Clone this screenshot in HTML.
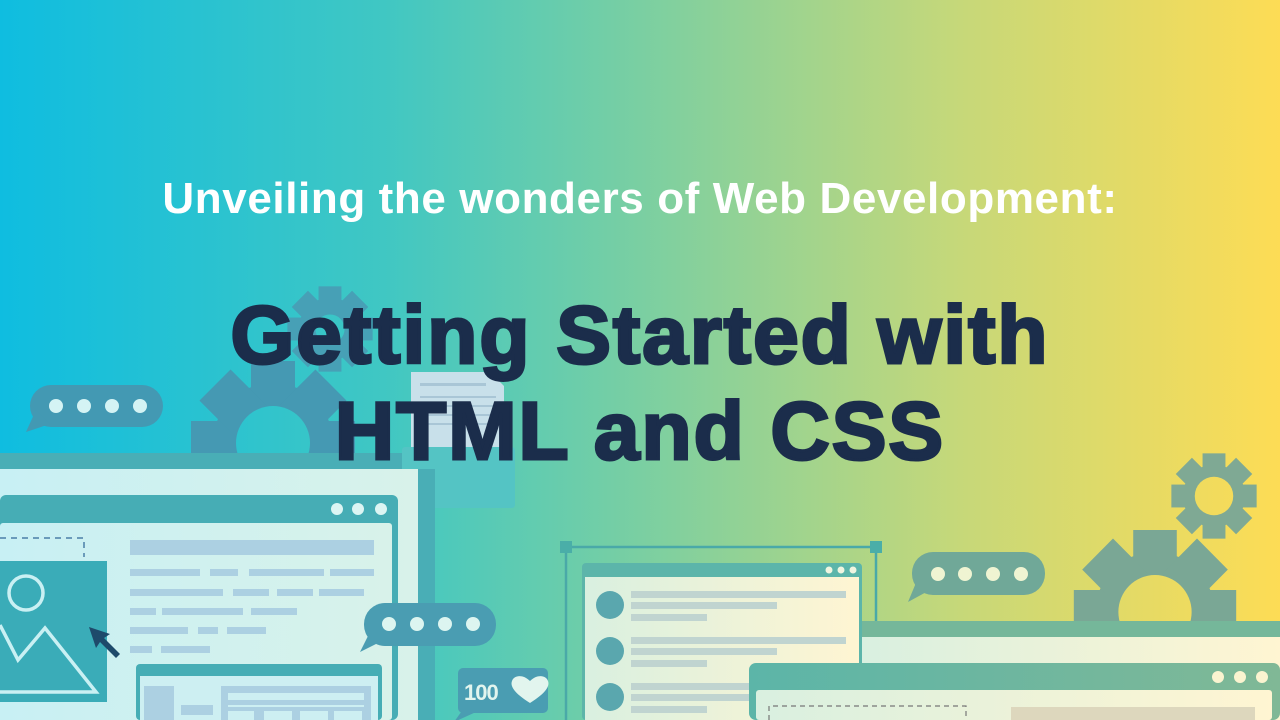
<!DOCTYPE html>
<html><head><meta charset="utf-8"><style>
html,body{margin:0;padding:0;width:1280px;height:720px;overflow:hidden}
body{position:relative;font-family:"Liberation Sans",Arial,sans-serif}
svg{position:absolute;left:0;top:0}
.sub{position:absolute;left:0;width:1280px;top:174px;text-align:center;color:#fff;font-weight:bold;font-size:44px;letter-spacing:0.6px}
.t{position:absolute;left:0;width:1280px;text-align:center;color:#1b2d4b;font-weight:bold;font-size:82px;letter-spacing:2px;-webkit-text-stroke:3px #1b2d4b;line-height:1}
</style></head><body>
<svg width="1280" height="720" viewBox="0 0 1280 720">
<defs>
<linearGradient id="bg" x1="0" y1="0" x2="1" y2="0">
<stop offset="0" stop-color="#0fbde0"/><stop offset="0.3" stop-color="#40c7c3"/><stop offset="0.5" stop-color="#7acfa2"/><stop offset="0.75" stop-color="#c6d879"/><stop offset="1" stop-color="#fddc55"/>
</linearGradient>
<linearGradient id="lp" x1="0" y1="0" x2="1" y2="0"><stop offset="0" stop-color="#c8f0f4"/><stop offset="1" stop-color="#d8f2ea"/></linearGradient>
<linearGradient id="rp" x1="0" y1="0" x2="1" y2="0"><stop offset="0" stop-color="#d9f0e0"/><stop offset="1" stop-color="#fff5d2"/></linearGradient>
<linearGradient id="rb" x1="0" y1="0" x2="1" y2="0"><stop offset="0" stop-color="#5cb5a8"/><stop offset="1" stop-color="#80b896"/></linearGradient>
<g id="teeth">
<circle r="60"/>
<rect x="-22" y="-82" width="44" height="164"/>
<rect x="-22" y="-82" width="44" height="164" transform="rotate(45)"/>
<rect x="-22" y="-82" width="44" height="164" transform="rotate(90)"/>
<rect x="-22" y="-82" width="44" height="164" transform="rotate(135)"/>
</g>
<mask id="m1"><rect x="-100" y="-100" width="200" height="200" fill="#fff"/><circle r="37" fill="#000"/></mask>
<mask id="m2"><rect x="-100" y="-100" width="200" height="200" fill="#fff"/><circle r="28" fill="#000"/></mask>
</defs>
<rect width="1280" height="720" fill="url(#bg)"/>

<g transform="translate(330,329) scale(0.52)" fill="#47a0b6" mask="url(#m2)"><use href="#teeth"/></g>
<g transform="translate(273,443)" fill="#4599b3" mask="url(#m1)"><use href="#teeth"/></g>

<rect x="30" y="385" width="133" height="42" rx="21" fill="#4399b3"/>
<path d="M36 410 L26 432 L50 424 Z" fill="#4399b3"/>
<g fill="#d4f3f4"><circle cx="56" cy="406" r="7"/><circle cx="84" cy="406" r="7"/><circle cx="112" cy="406" r="7"/><circle cx="140" cy="406" r="7"/></g>

<path d="M411 372 H490 L504 386 V460 H411 Z" fill="#c8e0ea"/>
<g fill="#a9c6d6"><rect x="420" y="383" width="66" height="3"/><rect x="420" y="396" width="76" height="2"/><rect x="420" y="405" width="76" height="2"/><rect x="420" y="414" width="76" height="2"/><rect x="420" y="423" width="76" height="2"/></g>
<rect x="402" y="447" width="113" height="61" rx="3" fill="#54c4c4"/>

<rect x="0" y="453" width="402" height="16" fill="#49aeb6"/>
<rect x="0" y="469" width="418" height="251" fill="url(#lp)"/>
<rect x="418" y="469" width="17" height="251" fill="#49aeb6"/>
<rect x="0" y="495" width="398" height="225" rx="6" fill="#46adb5"/>
<g fill="#dcf5f3"><circle cx="337" cy="509" r="6"/><circle cx="358" cy="509" r="6"/><circle cx="381" cy="509" r="6"/></g>
<rect x="0" y="523" width="392" height="197" rx="3" fill="url(#lp)"/>
<path d="M0 538 H84 V557" fill="none" stroke="#4b7fa8" stroke-width="1.5" stroke-dasharray="6 5"/>
<rect x="0" y="561" width="107" height="141" fill="#3aacb8"/>
<circle cx="26" cy="593" r="17" fill="none" stroke="#c9f0f3" stroke-width="3.5"/>
<path d="M0 625 L18 660 L45 628 L96 692 H0" fill="none" stroke="#c9f0f3" stroke-width="3.5"/>
<path d="M89 627 L110 634 L104 638 L120 654 L116 658 L100 642 L96 648 Z" fill="#1e4a6b"/>
<g fill="#acd0e2">
<rect x="130" y="540" width="244" height="15"/>
<rect x="130" y="569" width="70" height="7"/><rect x="210" y="569" width="28" height="7"/><rect x="249" y="569" width="75" height="7"/><rect x="330" y="569" width="44" height="7"/>
<rect x="130" y="589" width="93" height="7"/><rect x="233" y="589" width="36" height="7"/><rect x="277" y="589" width="36" height="7"/><rect x="319" y="589" width="45" height="7"/>
<rect x="130" y="608" width="26" height="7"/><rect x="162" y="608" width="81" height="7"/><rect x="251" y="608" width="46" height="7"/>
<rect x="130" y="627" width="58" height="7"/><rect x="198" y="627" width="20" height="7"/><rect x="227" y="627" width="39" height="7"/>
<rect x="130" y="646" width="22" height="7"/><rect x="161" y="646" width="49" height="7"/>
</g>
<rect x="364" y="603" width="132" height="43" rx="21" fill="#4a9db2"/>
<path d="M372 628 L360 652 L384 640 Z" fill="#4a9db2"/>
<g fill="#dcf5f0"><circle cx="389" cy="624" r="7"/><circle cx="417" cy="624" r="7"/><circle cx="445" cy="624" r="7"/><circle cx="473" cy="624" r="7"/></g>
<rect x="136" y="664" width="246" height="56" rx="4" fill="#46adb5"/>
<rect x="140" y="676" width="238" height="44" fill="#cdeff2"/>
<rect x="144" y="686" width="30" height="34" fill="#acd0e2"/>
<rect x="181" y="705" width="32" height="10" fill="#acd0e2"/>
<rect x="221" y="686" width="150" height="34" fill="#acd0e2"/>
<rect x="228" y="693" width="136" height="7" fill="#cdeff2"/>
<rect x="228" y="705" width="136" height="2" fill="#cdeff2"/>
<rect x="228" y="711" width="26" height="9" fill="#cdeff2"/><rect x="264" y="711" width="28" height="9" fill="#cdeff2"/><rect x="300" y="711" width="28" height="9" fill="#cdeff2"/><rect x="334" y="711" width="28" height="9" fill="#cdeff2"/>
<rect x="458" y="668" width="90" height="45" rx="5" fill="#4a9db2"/>
<path d="M464 708 L454 722 L476 712 Z" fill="#4a9db2"/>
<text x="464" y="700" font-family="Liberation Sans" font-weight="bold" font-size="22" fill="#e2f5ee" letter-spacing="-1">100</text>
<path d="M530 703 C514 693 510 686 512 681 C514 675 523 674 530 681 C537 674 546 675 548 681 C550 686 546 693 530 703 Z" fill="#e2f5ee"/>

<g stroke="#4aa9a8" stroke-width="2.5" fill="none"><path d="M566 547 H876 M566 547 V720 M876 547 V720"/></g>
<rect x="560" y="541" width="12" height="12" fill="#4aaea8"/><rect x="870" y="541" width="12" height="12" fill="#4aaea8"/>
<rect x="582" y="563" width="280" height="157" rx="4" fill="#5cb5aa"/>
<g fill="#f0f5e0"><circle cx="829" cy="570" r="3.5"/><circle cx="841" cy="570" r="3.5"/><circle cx="853" cy="570" r="3.5"/></g>
<rect x="585" y="577" width="274" height="143" fill="url(#rp)"/>
<g fill="#5aa7ae"><ellipse cx="610" cy="605" rx="14" ry="14"/><ellipse cx="610" cy="651" rx="14" ry="14"/><ellipse cx="610" cy="697" rx="14" ry="14"/></g>
<g fill="#c0d4d0">
<rect x="631" y="591" width="215" height="7"/><rect x="631" y="602" width="146" height="7"/><rect x="631" y="614" width="76" height="7"/>
<rect x="631" y="637" width="215" height="7"/><rect x="631" y="648" width="146" height="7"/><rect x="631" y="660" width="76" height="7"/>
<rect x="631" y="683" width="215" height="7"/><rect x="631" y="694" width="146" height="7"/><rect x="631" y="706" width="76" height="7"/>
</g>
<rect x="912" y="552" width="133" height="43" rx="21" fill="#70a898"/>
<path d="M918 578 L908 602 L930 590 Z" fill="#70a898"/>
<g fill="#eff4d2"><ellipse cx="938" cy="574" rx="7" ry="7"/><ellipse cx="965" cy="574" rx="7" ry="7"/><ellipse cx="993" cy="574" rx="7" ry="7"/><ellipse cx="1021" cy="574" rx="7" ry="7"/></g>
<g transform="translate(1214,496) scale(0.52)" fill="#7fa994" mask="url(#m1)"><use href="#teeth"/></g>
<g transform="translate(1155,612) scale(0.99,1)" fill="#7aa795" mask="url(#m1)"><use href="#teeth"/></g>
<rect x="862" y="621" width="418" height="16" fill="#75b79a"/>
<rect x="862" y="637" width="418" height="83" fill="url(#rp)"/>
<rect x="749" y="663" width="531" height="57" rx="7" fill="url(#rb)"/>
<g fill="#fbf4d0"><circle cx="1218" cy="677" r="6"/><circle cx="1240" cy="677" r="6"/><circle cx="1262" cy="677" r="6"/></g>
<rect x="756" y="690" width="516" height="30" rx="3" fill="url(#rp)"/>
<path d="M769 720 V706 H966 V720" fill="none" stroke="#777" stroke-width="1.2" stroke-dasharray="5 4"/>
<rect x="1011" y="707" width="244" height="13" fill="#ddd7bd"/>
</svg>
<div class="sub">Unveiling the wonders of Web Development:</div>
<div class="t" style="top:295px">Getting Started with</div>
<div class="t" style="top:391px">HTML and CSS</div>
</body></html>
